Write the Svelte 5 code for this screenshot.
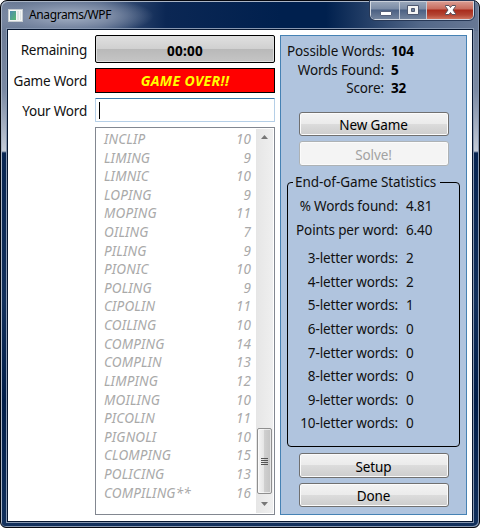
<script>
  const words = [
    ['INCLIP', 10], ['LIMING', 9], ['LIMNIC', 10], ['LOPING', 9], ['MOPING', 11],
    ['OILING', 7], ['PILING', 9], ['PIONIC', 10], ['POLING', 9], ['CIPOLIN', 11],
    ['COILING', 10], ['COMPING', 14], ['COMPLIN', 13], ['LIMPING', 12], ['MOILING', 10],
    ['PICOLIN', 11], ['PIGNOLI', 10], ['CLOMPING', 15], ['POLICING', 13], ['COMPILING**', 16]
  ];
  const lengths = [[3, 2], [4, 2], [5, 1], [6, 0], [7, 0], [8, 0], [9, 0], [10, 0]];
</script>

<div class="window">
  <header>
    <svg class="appicon" width="15" height="13" viewBox="0 0 15 13">
      <defs>
        <linearGradient id="ic" x1="0" y1="0" x2="1" y2="1">
          <stop offset="0" stop-color="#4b8bb0" /><stop offset="1" stop-color="#57b870" />
        </linearGradient>
      </defs>
      <rect x=".5" y=".5" width="14" height="12" fill="#f4f6f6" stroke="#c9cfd3" />
      <rect x="2" y="2" width="6" height="9" fill="url(#ic)" />
      <rect x="9" y="2" width="2" height="9" fill="#dfe5e5" />
      <rect x="12" y="2" width="1" height="9" fill="#dfe5e5" />
    </svg>
    <span class="title">Anagrams/WPF</span>
    <div class="controls">
      <div class="ctl min"><svg width="28" height="19"><rect x="9.5" y="10.5" width="11" height="4" rx=".5" fill="#fff" stroke="#56607a" /></svg></div>
      <div class="ctl max"><svg width="26" height="19"><path d="M7.500 4.500h11v9h-11z" fill="#f4f4f4" stroke="#4e5870" /><path d="M11.500 7.500h3v3h-3z" fill="#6f809b" stroke="#4e5870" /></svg></div>
      <div class="ctl close"><svg width="46" height="19"><path d="M18.500 4.500h3.500l1.500 2 1.500-2h3.500v1l-2.500 3.500 2.500 3.500v1h-3.500l-1.500-2-1.500 2h-3.500v-1l2.500-3.500-2.500-3.500z" fill="#fff" stroke="#56505c" /></svg></div>
    </div>
  </header>
  <main>
    <section class="left">
      <div class="field first"><label for="clock">Remaining</label><div id="clock" class="clock">00:00</div></div>
      <div class="field second"><label for="game">Game Word</label><div id="game" class="over">GAME OVER!!</div></div>
      <div class="field third"><label for="entry">Your Word</label><div id="entry" class="entry"><i></i></div></div>
      <div class="list">
        <div class="rows">
          {#each words as [word, points]}
            <div class="row"><span>{word}</span><span class="pts">{points}</span></div>
          {/each}
        </div>
        <div class="scroll">
          <svg class="arrow" width="7" height="4"><path d="M0 4 3.500 0 7 4z" fill="#777" /></svg>
          <div class="thumb"><b></b><b></b><b></b><b></b></div>
          <svg class="arrow" width="7" height="4"><path d="M0 0h7L3.500 4z" fill="#777" /></svg>
        </div>
      </div>
    </section>
    <aside>
      <div class="summary">
        <div><span>Possible Words:</span><b>104</b></div>
        <div><span>Words Found:</span><b>5</b></div>
        <div><span>Score:</span><b>32</b></div>
      </div>
      <button class="new">New Game</button>
      <button class="solve" disabled>Solve!</button>
      <div class="group">
        <div class="legend"><span>End-of-Game Statistics</span></div>
        <div class="stat"><span>% Words found:</span><span>4.81</span></div>
        <div class="stat"><span>Points per word:</span><span>6.40</span></div>
        <div class="lengths">
          {#each lengths as [n, count]}
            <div class="stat"><span>{n}-letter words:</span><span>{count}</span></div>
          {/each}
        </div>
      </div>
      <button class="setup">Setup</button>
      <button class="done">Done</button>
    </aside>
  </main>
</div>

<style>
  :global(body) { background: #fff; overflow: hidden; }
  * { box-sizing: border-box; }
  .window {
    width: 480px; height: 528px; padding: 0 7px 6px; border: 1px solid #05070e; border-radius: 7px 7px 6px 6px;
    font: 13.5px/18px "Noto Sans", "Open Sans", sans-serif; color: #111; letter-spacing: -.13px;
    background:
      radial-gradient(ellipse 85px 20px at 68px 15px, #a5b2c6 0, #8492abdd 50%, #8492ab00 100%) 0 0 / 100% 28px no-repeat,
      linear-gradient(90deg, #71809b 0, #62738f 20px, #4a5f83 100px, #0b2754 165px, #00204e 280px, #00204e 325px, #536889 420px, #687894 480px) 0 0 / 100% 30px no-repeat,
      linear-gradient(#66758f 0, #7b8aa4 90px, #c4cbd7 150px, #082552 152px, #12305c 300px, #001d49 400px, #12305c 527px);
    box-shadow: inset 1px 1px #a9b4c5, inset -1px -1px #8797b0;
  }
  header { display: flex; height: 28px; }
  .appicon { margin: 8px 0 0 0; flex: none; }
  .title { margin: 5px 0 0 6px; font-size: 12px; letter-spacing: -.39px; color: #000; }
  .controls {
    margin-left: auto; display: flex; height: 19px; margin-right: -2px; width: 104px;
    border: 1px solid #d2d8e1; border-top: 0; border-radius: 0 0 5px 5px; outline: 1px solid #273856; overflow: hidden;
  }
  .ctl { height: 18px; background: linear-gradient(#c9d0db 0 1px, #98a5b9 1px, #7b8ca6 8px, #4b6083 9px, #71829c 18px); border-right: 1px solid #c3cad6; }
  .ctl svg { display: block; }
  .min { width: 29px; }
  .max { width: 27px; }
  .close { flex: 1; border: 0; background: linear-gradient(#e6b8b0 0 1px, #d9988d 1px, #c76b5d 8px, #a92b1b 9px, #b34533 14px, #d0745e 18px); }
  main {
    height: 493px; margin-left: -1px; width: 466px; background: #fff; border: 1px solid #05152f; outline: 1px solid #8797b0;
    padding: 5px 4px 5px 0; display: flex; gap: 5px;
  }
  .left { width: 267px; display: flex; flex-direction: column; }
  .field { display: flex; justify-content: space-between; align-items: center; }
  label { width: 79px; text-align: right; white-space: nowrap; letter-spacing: -.2px; }
  .first label, .third label { padding-top: 2px; }
  .second { margin-top: 5px; }
  .third { margin-top: 5px; }
  .clock, .over, .entry { width: 180px; text-align: center; font-weight: 700; }
  .clock { height: 28px; border: 1px solid #000; border-radius: 2px; line-height: 30px; letter-spacing: .25px; color: #000; background: linear-gradient(#e0e0e0, #d0d0d0 50%, #b9b9b9 51%, #c5c5c5); box-shadow: inset 0 0 0 1px #dedede; }
  .over { height: 25px; border: 1px solid #000; background: #f00; color: #ff0; font-size: 14px; font-style: italic; line-height: 23px; letter-spacing: .35px; }
  .entry { height: 24px; border: 1px solid #b5cfe7; border-top-color: #3d7bad; border-radius: 1px; padding: 3px; }
  .entry i { display: block; width: 1px; height: 17px; background: #000; }
  .list { margin: 5px 0 0 87px; height: 388px; border: 1px solid #828790; display: flex; padding: 1px; }
  .rows { flex: 1; color: #a9a9a9; font-style: italic; padding: 1px 5px 0 7px; }
  .row { display: flex; justify-content: space-between; height: 18.62px; line-height: 18.62px; letter-spacing: .15px; }
  .pts { letter-spacing: 0; }
  .scroll { width: 17px; background: linear-gradient(90deg, #e6e6e6, #efefef); display: flex; flex-direction: column; align-items: center; padding: 6px 0 7px; }
  .thumb { width: 15px; height: 66px; margin: auto 0 8px; border: 1px solid #8f8f8f; border-radius: 2px; background: linear-gradient(90deg, #f5f5f5, #e4e4e4 48%, #cfcfcf 50%, #c3c3c3); box-shadow: inset 0 0 0 1px #fff9; display: flex; flex-direction: column; align-items: center; justify-content: center; gap: 1px; }
  .thumb b { width: 7px; height: 1px; background: #555; }
  aside { width: 187px; height: 480px; background: #b0c4de; border: 1px solid #4682b4; padding: 6px; display: flex; flex-direction: column; align-items: center; }
  .summary { width: 100%; height: 70px; }
  .summary div { display: flex; height: 18.5px; gap: 7px; }
  .summary span { width: 97px; text-align: right; white-space: nowrap; }
  .summary b { color: #000; }
  button { width: 150px; height: 24px; padding: 2px 0 0; font: inherit; letter-spacing: -.13px; color: #000; border: 1px solid #707070; border-radius: 3px; background: linear-gradient(#f3f3f3, #ebebeb 49%, #dcdcdc 50%, #cdcdcd); box-shadow: inset 0 0 0 1px #fbfbfb; flex: none; }
  .solve { margin-top: 5px; height: 25px; color: #a2a2a2; border-color: #adb2b5; background: #f4f4f4; }
  .group { width: 173px; height: 265px; margin-top: 16px; border: 1px solid #000; border-radius: 4px; flex: none; }
  .legend { height: 15px; margin-top: -10px; padding-left: 5px; letter-spacing: -.07px; }
  .legend span { display: inline-block; background: #b0c4de; padding: 0 4px 0 2px; white-space: nowrap; }
  .stat { display: flex; gap: 8px; height: 23.6px; line-height: 23.6px; }
  .stat span:first-child { width: 110px; text-align: right; white-space: nowrap; }
  .legend + .stat { margin-top: 7px; }
  .lengths { margin-top: 5px; }
  .setup { margin-top: 6px; height: 25px; }
  .done { margin-top: 5px; }
</style>
